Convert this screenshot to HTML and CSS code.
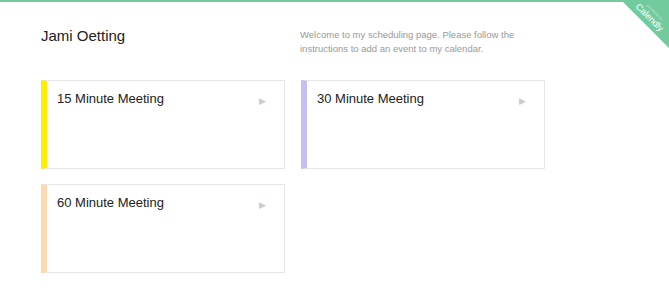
FILE: index.html
```html
<!DOCTYPE html>
<html lang="en">
<head>
    <meta charset="UTF-8">
    <meta name="viewport" content="width=device-width, initial-scale=1.0">
    <title>Jami Oetting</title>
    <link rel="stylesheet" href="styles.css">
</head>
<body>
    <div class="badge">
        <div class="badge-text">
            <span class="powered">powered by</span>
            <span class="brand">Calendly</span>
        </div>
    </div>
    <div class="header">
        <h1 class="name">Jami Oetting</h1>
        <p class="welcome">Welcome to my scheduling page. Please follow the instructions to add an event to my calendar.</p>
    </div>
    <div class="events">
        <div class="event yellow">
            <span class="event-title">15 Minute Meeting</span>
            <span class="arrow">&#9654;</span>
        </div>
        <div class="event purple">
            <span class="event-title">30 Minute Meeting</span>
            <span class="arrow">&#9654;</span>
        </div>
        <div class="event peach">
            <span class="event-title">60 Minute Meeting</span>
            <span class="arrow">&#9654;</span>
        </div>
    </div>
</body>
</html>
```

FILE: styles.css
```css
body {
    margin: 0;
    border-top: 2px solid #72cb9c;
    font-family: "Liberation Sans", Arial, sans-serif;
    background: #fff;
    color: #222;
}
.badge {
    position: absolute;
    top: 0;
    right: 0;
    width: 48px;
    height: 48px;
    background: #72cb9c;
    clip-path: polygon(0 0, 100% 0, 100% 100%);
    overflow: hidden;
}
.badge-text {
    position: absolute;
    top: 9px;
    right: -12px;
    width: 60px;
    transform: rotate(45deg);
    display: flex;
    flex-direction: column;
    align-items: center;
    color: #fff;
    line-height: 1;
}
.powered {
    font-size: 4px;
    opacity: 0.5;
}
.brand {
    font-size: 9px;
    margin-top: 1px;
}
.header {
    display: flex;
    padding: 23px 0 0 41px;
}
.name {
    width: 259px;
    margin: 2px 0 0 0;
    font-size: 15px;
    font-weight: normal;
    line-height: 18px;
}
.welcome {
    width: 230px;
    margin: 3px 0 0 0;
    font-size: 9.5px;
    line-height: 13.5px;
    color: #999;
}
.events {
    display: grid;
    grid-template-columns: 244px 244px;
    gap: 15px 16px;
    padding: 25px 0 0 41px;
}
.event {
    box-sizing: border-box;
    height: 89px;
    border: 1px solid #e6e6e6;
    border-left: 6px solid;
    display: flex;
    justify-content: space-between;
    align-items: flex-start;
    padding: 10px 18px 0 10px;
}
.event.yellow {
    border-left-color: #ffee00;
}
.event.purple {
    border-left-color: #c4bff5;
}
.event.peach {
    border-left-color: #ffd8b0;
}
.event-title {
    font-size: 13px;
    line-height: 16px;
    color: #222;
}
.arrow {
    font-size: 9px;
    color: #cccccc;
    margin-top: 5px;
}
```
